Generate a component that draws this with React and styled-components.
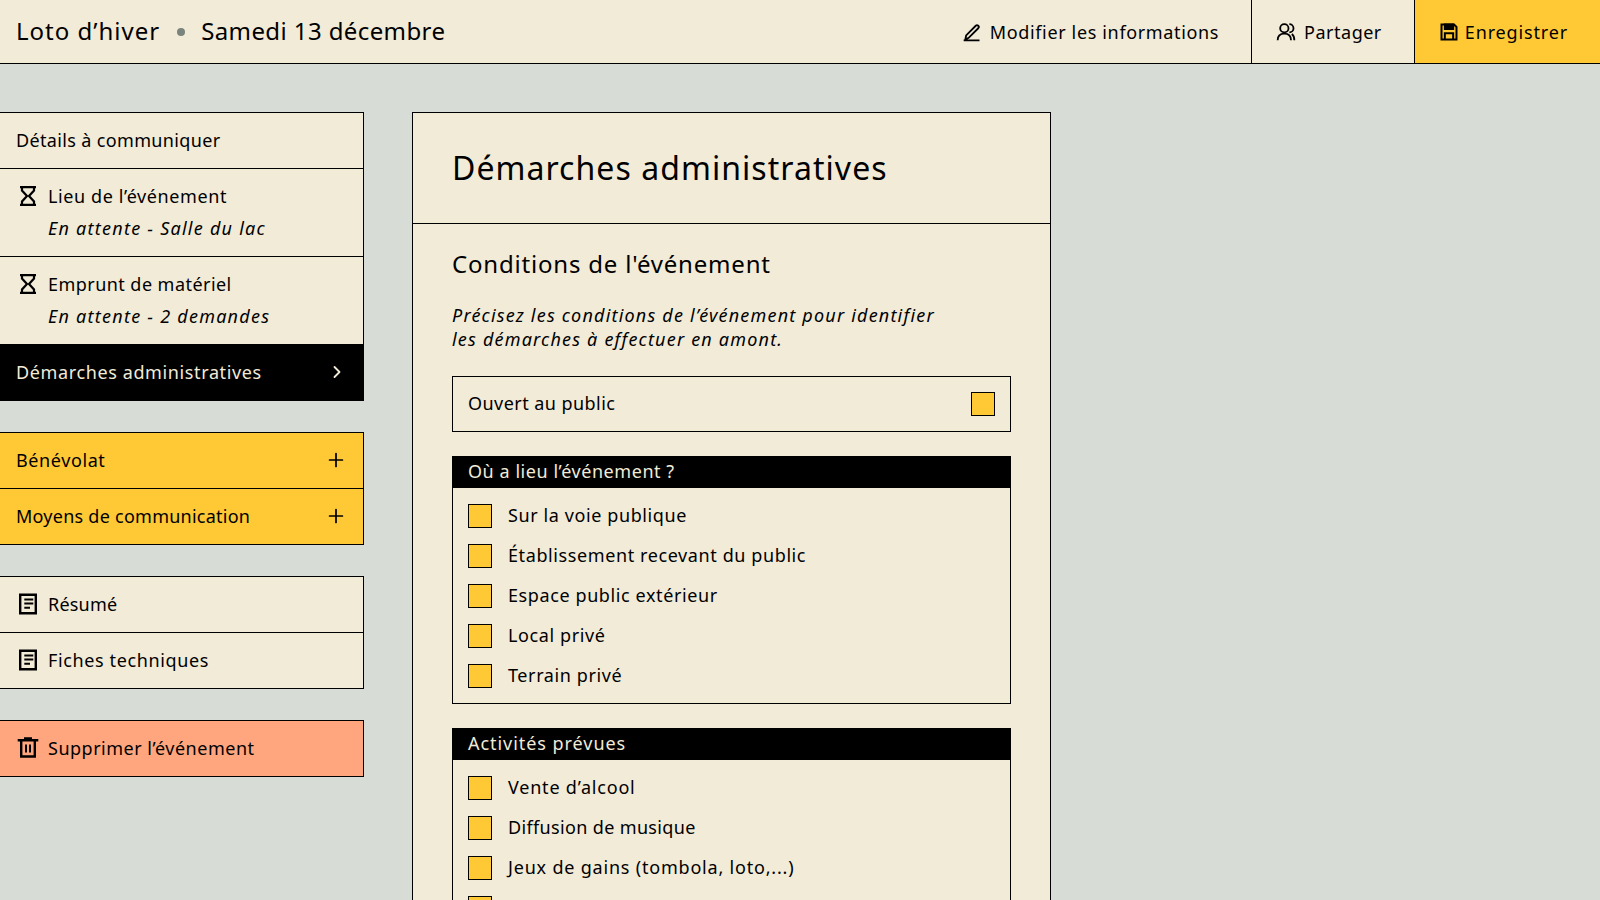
import React from "react";
import styled, { createGlobalStyle } from "styled-components";
import { Plus, ChevronRight } from "lucide-react";

const GlobalStyle = createGlobalStyle`
  * { box-sizing: border-box; }
  html, body { margin: 0; height: 100%; overflow: hidden; }
  body {
    background: #d7dcd6;
    color: #000;
    font-family: "Noto Sans", sans-serif;
    font-size: 18px;
  }
`;

const cream = "#f2ebd8";
const yellow = "#ffc936";

const Header = styled.header`
  display: flex;
  align-items: stretch;
  height: 64px;
  background: ${cream};
  border-bottom: 1px solid #000;
`;

const EventTitle = styled.div`
  display: flex;
  align-items: center;
  flex: 1;
  padding: 0 0 2px 16px;
  font-size: 24px;
`;

const TitlePart = styled.span`
  letter-spacing: ${(p) => p.$track}px;
`;

const Dot = styled.span`
  width: 8px;
  height: 8px;
  margin: 2px 16px 0 17px;
  border-radius: 50%;
  background: #7a837c;
`;

const HeaderButton = styled.div`
  display: flex;
  align-items: center;
  gap: ${(p) => p.$gap ?? 8}px;
  padding: 0 32px 0 24px;
  letter-spacing: ${(p) => p.$track ?? 0.65}px;
  background: ${(p) => (p.$primary ? yellow : "transparent")};
  border-left: ${(p) => (p.$plain ? "none" : "1px solid #000")};
`;

const Layout = styled.div`
  display: flex;
  align-items: flex-start;
  gap: 48px;
  padding-top: 48px;
`;

const Sidebar = styled.nav`
  display: flex;
  flex-direction: column;
  gap: 31px;
  width: 364px;
`;

const Group = styled.div`
  display: flex;
  flex-direction: column;
`;

const Item = styled.div`
  display: flex;
  align-items: ${(p) => (p.$tall ? "flex-start" : "center")};
  gap: 8px;
  min-height: 57px;
  padding: ${(p) => (p.$tall ? "11px 16px 12px" : "0 16px 2px")};
  background: ${(p) => p.$bg || cream};
  color: ${(p) => (p.$dark ? cream : "#000")};
  border: 1px solid #000;
  border-left: none;
  letter-spacing: ${(p) => p.$track ?? 0.5}px;
  & + & { margin-top: -1px; }
`;

const ItemLabel = styled.span`
  flex: 1;
`;

const ItemText = styled.div`
  flex: 1;
  line-height: 32px;
`;

const ItemNote = styled.div`
  font-style: italic;
  letter-spacing: 1.25px;
`;

const Panel = styled.main`
  width: 639px;
  height: 900px;
  background: ${cream};
  border: 1px solid #000;
`;

const PanelHead = styled.div`
  height: 111px;
  padding: 0 39px 2px;
  display: flex;
  align-items: center;
  border-bottom: 1px solid #000;
`;

const PanelTitle = styled.h1`
  margin: 0;
  font-size: 32px;
  font-weight: 400;
  letter-spacing: 1.05px;
`;

const PanelBody = styled.div`
  padding: 24px 39px;
`;

const SectionTitle = styled.h2`
  margin: 0 0 23px;
  font-size: 24px;
  line-height: 32px;
  font-weight: 400;
  letter-spacing: 0.8px;
`;

const Intro = styled.p`
  margin: 0 0 25px;
  font-style: italic;
  line-height: 24px;
  letter-spacing: 1.2px;
`;

const PublicRow = styled.div`
  display: flex;
  align-items: center;
  justify-content: space-between;
  height: 56px;
  padding: 0 15px;
  border: 1px solid #000;
  margin-bottom: 24px;
  letter-spacing: 0.45px;
`;

const Box = styled.span`
  flex: none;
  width: 24px;
  height: 24px;
  background: ${yellow};
  border: 1px solid #000;
`;

const Fieldset = styled.section`
  border: 1px solid #000;
  margin-bottom: 24px;
`;

const Legend = styled.div`
  height: 32px;
  margin: -1px -1px 0;
  padding: 0 16px 2px;
  display: flex;
  align-items: center;
  background: #000;
  color: ${cream};
  letter-spacing: ${(p) => p.$track ?? 0.55}px;
`;

const Options = styled.div`
  display: flex;
  flex-direction: column;
  gap: 16px;
  padding: 16px 15px 15px;
`;

const Option = styled.label`
  display: flex;
  align-items: center;
  gap: 16px;
  height: 24px;
  letter-spacing: ${(p) => p.$track ?? 0.6}px;
`;

const OptionLabel = styled.span`
  padding-bottom: 2px;
`;

const IconSvg = styled.svg`
  flex: none;
  width: ${(p) => p.$size || 24}px;
  height: ${(p) => p.$size || 24}px;
  margin-top: ${(p) => p.$drop || 0}px;
`;

const HourglassIcon = () => (
  <IconSvg $drop={4} viewBox="0 0 24 24" fill="none" stroke="#000" strokeWidth="2.2">
    <path d="M4 3.1h16M4 20.9h16M6 3v3.5L11 12l-5 5.5V21M18 3v3.5L13 12l5 5.5V21" />
  </IconSvg>
);

const DocIcon = () => (
  <IconSvg viewBox="0 0 24 24" fill="none" stroke="#000" strokeWidth="2.4">
    <path d="M4.2 2.7h15.6v18.6H4.2z" />
    <path strokeWidth="2" d="M8.3 7.5h9M8.3 11.500h9M8.3 15.8h5.7" />
  </IconSvg>
);

const TrashIcon = () => (
  <IconSvg viewBox="0 0 24 24" fill="none" stroke="#000" strokeWidth="2.4">
    <path d="M1.7 4.2h20.6M8 2.4h8M5.2 4v16.5h13.6V4" />
    <path strokeWidth="2" d="M10 8.5v8M14 8.5v8" />
  </IconSvg>
);

const PenIcon = () => (
  <IconSvg $size={20} viewBox="0 0 24 24" fill="none" stroke="#000" strokeWidth="2.2">
    <path d="M2 22h19M4 21l1-5L16.5 4.5a2.1 2.1 0 0 1 3 3L8 19z" />
  </IconSvg>
);

const UsersIcon = () => (
  <IconSvg $size={20} viewBox="0 0 24 24" fill="none" stroke="#000" strokeWidth="2.2">
    <circle cx="10" cy="7.5" r="5" />
    <path d="M2 22c0-5 3-8 8-8s8 3 8 8M16 2.5a5 5 0 0 1 0 10M19 14.5c2 1.500 3 4 3 7.500" />
  </IconSvg>
);

const SaveIcon = () => (
  <IconSvg $size={20} viewBox="0 0 24 24" fill="none" stroke="#000" strokeWidth="2.4">
    <path d="M3 3h15l3 3v15H3zM7 21v-7.500h10V21" />
    <path d="M7 3h10v5.500H7z" fill="#000" />
  </IconSvg>
);

const places = [
  { label: "Sur la voie publique" },
  { label: "Établissement recevant du public" },
  { label: "Espace public extérieur" },
  { label: "Local privé" },
  { label: "Terrain privé" },
];

const activities = [
  { label: "Vente d’alcool", track: 0.8 },
  { label: "Diffusion de musique", track: 0.35 },
  { label: "Jeux de gains (tombola, loto,...)", track: 0.8 },
  { label: "Animaux présents" },
];

const App = () => (
  <>
    <GlobalStyle />
    <Header>
      <EventTitle>
        <TitlePart $track={1}>Loto d’hiver</TitlePart>
        <Dot />
        <TitlePart $track={0.4}>Samedi 13 décembre</TitlePart>
      </EventTitle>
      <HeaderButton $plain>
        <PenIcon />
        Modifier les informations
      </HeaderButton>
      <HeaderButton $track={0.5}>
        <UsersIcon />
        Partager
      </HeaderButton>
      <HeaderButton $primary $track={0.85} $gap={6}>
        <SaveIcon />
        Enregistrer
      </HeaderButton>
    </Header>
    <Layout>
      <Sidebar>
        <Group>
          <Item $track={0.35}>Détails à communiquer</Item>
          <Item $tall $track={0.6}>
            <HourglassIcon />
            <ItemText>
              Lieu de l’événement
              <ItemNote>En attente - Salle du lac</ItemNote>
            </ItemText>
          </Item>
          <Item $tall $track={0.45}>
            <HourglassIcon />
            <ItemText>
              Emprunt de matériel
              <ItemNote>En attente - 2 demandes</ItemNote>
            </ItemText>
          </Item>
          <Item $bg="#000" $dark $track={0.62}>
            <ItemLabel>Démarches administratives</ItemLabel>
            <ChevronRight size={20} strokeWidth={2.2} />
          </Item>
        </Group>
        <Group>
          <Item $bg={yellow} $track={0.6}>
            <ItemLabel>Bénévolat</ItemLabel>
            <Plus size={22} strokeWidth={1.9} />
          </Item>
          <Item $bg={yellow} $track={0.25}>
            <ItemLabel>Moyens de communication</ItemLabel>
            <Plus size={22} strokeWidth={1.9} />
          </Item>
        </Group>
        <Group>
          <Item $track={0.2}>
            <DocIcon />
            Résumé
          </Item>
          <Item $track={0.62}>
            <DocIcon />
            Fiches techniques
          </Item>
        </Group>
        <Group>
          <Item $bg="#ffa67e">
            <TrashIcon />
            Supprimer l’événement
          </Item>
        </Group>
      </Sidebar>
      <Panel>
        <PanelHead>
          <PanelTitle>Démarches administratives</PanelTitle>
        </PanelHead>
        <PanelBody>
          <SectionTitle>Conditions de l'événement</SectionTitle>
          <Intro>
            Précisez les conditions de l’événement pour identifier
            <br />
            les démarches à effectuer en amont.
          </Intro>
          <PublicRow>
            <OptionLabel>Ouvert au public</OptionLabel>
            <Box />
          </PublicRow>
          <Fieldset>
            <Legend>Où a lieu l’événement ?</Legend>
            <Options>
              {places.map(({ label, track }) => (
                <Option key={label} $track={track}>
                  <Box />
                  <OptionLabel>{label}</OptionLabel>
                </Option>
              ))}
            </Options>
          </Fieldset>
          <Fieldset>
            <Legend $track={0.95}>Activités prévues</Legend>
            <Options>
              {activities.map(({ label, track }) => (
                <Option key={label} $track={track}>
                  <Box />
                  <OptionLabel>{label}</OptionLabel>
                </Option>
              ))}
            </Options>
          </Fieldset>
        </PanelBody>
      </Panel>
    </Layout>
  </>
);

export default App;
